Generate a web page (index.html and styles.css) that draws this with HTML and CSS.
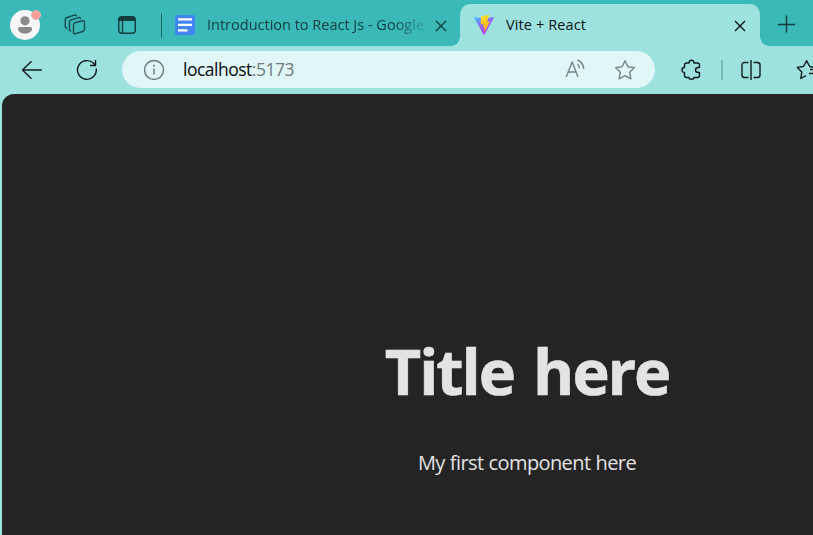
FILE: index.html
```html
<!DOCTYPE html>
<html lang="en">
<head>
<meta charset="utf-8">
<title>Vite + React</title>
<link rel="stylesheet" href="styles.css">
</head>
<body>
<div class="browser">
  <header class="tabstrip">
    <div class="avatar">
      <svg width="30" height="30" viewBox="0 0 30 30"><circle cx="15" cy="15" r="15" fill="#f8f7f7"/><circle cx="15" cy="10.8" r="4.6" fill="#8c8989"/><path d="M8 18.500Q8 17 9.500 17H20.500Q22 17 22 18.500C22 22 19 23.500 15 23.500S8 22 8 18.500Z" fill="#8c8989"/></svg>
      <span class="badge"></span>
    </div>
    <svg class="workspaces" width="22" height="22" viewBox="0 0 22 22"><path d="M10.800 8.800L18.500 6.700Q20.500 6.200 20.500 8.200V15.300Q20.500 17 18.800 17.500L11.500 19.700Q9.500 20.200 9.500 18.200V10.700Q9.500 9.200 10.800 8.800Z"/><path d="M16.800 4.700Q16.300 3.100 14.500 3.600L7 5.800Q5.500 6.300 5.500 8V15Q5.500 17 7.400 16.900"/><path d="M12.800 2.200Q12.200.7 10.500 1.200L3 3.500Q1.300 4 1.300 5.700V12.500Q1.300 14.300 3.300 14.200"/></svg>
    <svg class="tab-actions" width="20" height="20" viewBox="0 0 20 20"><rect x="1.700" y="1.700" width="16.600" height="16.600" rx="3.200"/><path class="solid" d="M1.500 6V4.500Q1.500 1.500 4.500 1.500H15.500Q18.500 1.500 18.500 4.500V6Z"/><path d="M5.500 6V18"/></svg>
    <span class="strip-line"></span>
    <div class="tab-idle">
      <svg class="docs" width="20" height="20" viewBox="0 0 20 20"><rect width="20" height="20" rx="2.500" fill="#4285f4"/><path d="M3 4.300H17M3 9.900H17M3 15.300H12.500" stroke="#fff" stroke-width="2.200"/></svg>
      <span class="idle-title">Introduction to React Js - Google</span>
      <svg class="close" width="12" height="12" viewBox="0 0 12 12"><path d="M1 1L11 11M11 1L1 11"/></svg>
    </div>
    <div class="tab-active">
      <svg class="vite" width="20" height="20" viewBox="0 0 20 20"><defs><linearGradient id="shell" x1="0" y1="0" x2=".6" y2="1"><stop offset="0" stop-color="#41c8ff"/><stop offset=".5" stop-color="#9166fa"/><stop offset="1" stop-color="#bd34fe"/></linearGradient><linearGradient id="bolt" x1=".4" y1="0" x2=".6" y2="1"><stop offset="0" stop-color="#ffdd35"/><stop offset="1" stop-color="#ffa800"/></linearGradient></defs><path fill="url(#shell)" d="M19.800 3L10.500 19.600Q10 20.400 9.500 19.600L.2 3Q-.2 2 .8 2.100L10 3.700L19.200 2.100Q20.200 2 19.800 3Z"/><path fill="url(#bolt)" d="M14.300 .1L7.500 1.200Q7.100 1.300 7.100 1.600L6.700 9.400L9.600 9L9 12.800L11 12.300L10.100 16.500Q10.300 17 10.800 16.400L16 6.500L13.200 6.900L15 .5Q15 0 14.300 .1Z"/></svg>
      <span class="active-title">Vite + React</span>
      <svg class="close dark" width="12" height="12" viewBox="0 0 12 12"><path d="M1 1L11 11M11 1L1 11"/></svg>
    </div>
    <svg class="new-tab" width="18" height="18" viewBox="0 0 18 18"><path d="M8.500 .5V17.500M0 9.500H17"/></svg>
  </header>
  <nav class="toolbar">
    <svg class="back" width="22" height="20" viewBox="0 0 22 20"><path d="M20.800 10H1.500M10.500 1.300L1.500 10L10.500 18.700"/></svg>
    <svg class="reload" width="22" height="22" viewBox="0 0 22 22"><path d="M20.200 9.500A9.400 9.400 0 1 1 17.300 4.100L19.300 6.200M19.500 1V6.500H14"/></svg>
    <div class="address">
      <svg class="info" width="22" height="22" viewBox="0 0 22 22"><circle cx="11" cy="11" r="9.500"/><path d="M11 9.500V15.500"/><circle class="dot" cx="11" cy="6.700" r="1"/></svg>
      <span class="url">localhost<span class="port">:5173</span></span>
      <svg class="read" width="22" height="20" viewBox="0 0 22 20"><path d="M1.200 18L7.200 3L13 18M3.200 13H11M12.300 5Q14.300 6.300 14.500 9.300M12.500 1Q18.200 3.300 18.700 10"/></svg>
      <svg class="star" width="22" height="22" viewBox="0 0 22 22"><path d="M11 1.700L13.900 7.700L20.400 8.600L15.700 13.200L16.800 19.800L11 16.700L5.200 19.800L6.300 13.200L1.600 8.600L8.100 7.700Z"/></svg>
    </div>
    <svg class="puzzle" width="22" height="22" viewBox="0 0 22 22"><path d="M3.500 6Q3.500 4 5.500 4H8Q8 1.200 10.500 1.200T13 4H16.500Q18.500 4 18.500 6V8.500H17.500Q14.500 8.500 14.500 11T17.500 13.500H18.500V16.500Q18.500 18.500 16.500 18.500H13Q13 20.300 10.500 20.300T8 18.500H5.500Q3.500 18.500 3.500 16.500V13.500Q1 13.500 1 11T3.500 8.500Z"/></svg>
    <span class="tool-line"></span>
    <svg class="split" width="20" height="20" viewBox="0 0 20 20"><path d="M7.500 2.500H3.500Q1 2.500 1 5V15Q1 17.500 3.500 17.500H7.500M12.500 2.500H16.500Q19 2.500 19 5V15Q19 17.500 16.500 17.500H12.500M10 0V20"/></svg>
    <svg class="favorites" width="24" height="22" viewBox="0 0 24 22"><path d="M18 8.400L13.700 7.500L10.500 1.700L7.500 7.500L1.300 8.400L5.800 13L4.800 19.500L10 16.700M14 10.500H23M13 14.500H23"/></svg>
  </nav>
  <div class="view">
    <main class="content">
      <h1>Title here</h1>
      <p>My first component here</p>
    </main>
  </div>
</div>
</body>
</html>
```

FILE: styles.css
```css
* { box-sizing: border-box; }
body { margin: 0; overflow: hidden; }
.browser {
  width: 813px;
  height: 535px;
  overflow: hidden;
  display: flex;
  flex-direction: column;
  background: #9ee2e0;
  font-family: "Open Sans", "Noto Sans", sans-serif;
}
svg { display: block; flex: none; fill: none; stroke: #111b1b; stroke-width: 1.4; stroke-linejoin: round; }
span { white-space: nowrap; }
.tabstrip { height: 46px; flex: none; display: flex; align-items: center; padding-left: 10px; background: #3bb8b8; }
.avatar { position: relative; width: 30px; margin-top: 4px; }
.avatar svg, .docs, .vite { stroke: none; }
.badge { position: absolute; left: 21px; top: 0; width: 10px; height: 10px; border: 1px solid #e9b5b1; border-radius: 50%; background: #ff9e99; }
.workspaces { margin: 4px 0 0 24px; stroke: #14494b; }
.tab-actions { margin: 4px 0 0 31px; stroke: #123c3e; }
.tab-actions .solid { fill: #123c3e; stroke: none; }
.strip-line { width: 1px; height: 25px; margin: 5px 0 0 24px; background: #20696b; }
.tab-idle { width: 298px; height: 46px; display: flex; align-items: center; padding: 4px 12px 0 13px; }
.idle-title {
  width: 219px;
  margin: -1px 0 0 12px;
  font-size: 14.500px;
  line-height: 22px;
  color: #123e40;
  -webkit-mask-image: linear-gradient(to right, #000 187px, transparent 222px);
  mask-image: linear-gradient(to right, #000 187px, transparent 222px);
}
.close { stroke: #123c3e; margin: 2px 0 0 9px; }
.tab-active {
  position: relative;
  width: 300px;
  height: 42px;
  align-self: flex-end;
  display: flex;
  align-items: center;
  padding: 0 14px;
  border-radius: 10px 10px 0 0;
  background: #9ee2e0;
}
.tab-active::before, .tab-active::after { content: ""; position: absolute; bottom: 0; width: 9px; height: 9px; }
.tab-active::before { left: -9px; background: radial-gradient(circle at 0 0, transparent 8.500px, #9ee2e0 9px); }
.tab-active::after { right: -9px; background: radial-gradient(circle at 100% 0, transparent 8.500px, #9ee2e0 9px); }
.active-title { margin-left: 12px; font-size: 14.500px; line-height: 22px; letter-spacing: .12px; color: #0b1414; }
.close.dark { margin-left: auto; stroke: #0b1414; }
.new-tab { margin: 2px 0 0 18px; stroke: #123c3e; }
.toolbar { height: 48px; flex: none; display: flex; align-items: center; padding-left: 21px; }
.back { margin-top: -1px; }
.reload { margin-left: 33px; }
.address { width: 533px; height: 37px; flex: none; display: flex; align-items: center; margin: -1px 0 0 24px; padding-left: 21px; border-radius: 19px; background: #e0f6f7; }
.info { stroke: #697477; }
.info .dot { fill: #697477; stroke: none; }
.url { width: 381px; margin: -1px 0 0 18px; font-size: 17.500px; line-height: 26px; letter-spacing: -.5px; color: #080c0c; }
.port { color: #70797b; }
.read, .star { stroke: #7b8385; }
.read { margin: -2px 0 0 1px; }
.star { margin-left: 27px; }
.puzzle { margin-left: 26px; }
.tool-line { width: 2px; height: 20px; margin-left: 18px; background: #7bb9b7; flex: none; }
.split { margin-left: 18px; }
.favorites { margin-left: 35px; }
.view { flex: 1; margin-left: 2px; overflow: hidden; border-radius: 12px 0 0 0; background: #242424; }
.content { width: 1050px; padding-top: 235px; text-align: center; color: #e3e3e3; }
h1 { margin: 0; font-size: 63px; line-height: 84px; font-weight: 700; letter-spacing: -2.100px; word-spacing: 5px; -webkit-text-stroke: .6px #e3e3e3; }
p { margin: 35px 0 0; font-size: 20px; line-height: 30px; letter-spacing: -.6px; word-spacing: .5px; }
```
